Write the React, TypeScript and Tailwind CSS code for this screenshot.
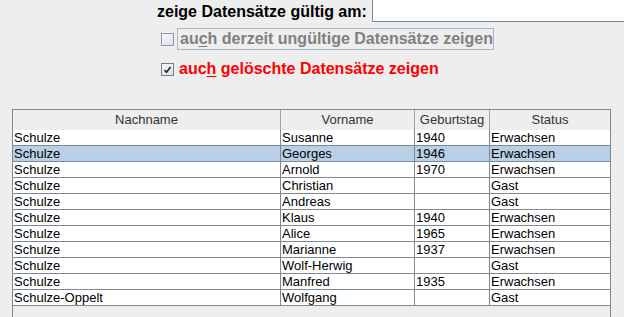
import React from "react";

const rows: [string, string, string, string][] = [
  ["Schulze", "Susanne", "1940", "Erwachsen"],
  ["Schulze", "Georges", "1946", "Erwachsen"],
  ["Schulze", "Arnold", "1970", "Erwachsen"],
  ["Schulze", "Christian", "", "Gast"],
  ["Schulze", "Andreas", "", "Gast"],
  ["Schulze", "Klaus", "1940", "Erwachsen"],
  ["Schulze", "Alice", "1965", "Erwachsen"],
  ["Schulze", "Marianne", "1937", "Erwachsen"],
  ["Schulze", "Wolf-Herwig", "", "Gast"],
  ["Schulze", "Manfred", "1935", "Erwachsen"],
  ["Schulze-Oppelt", "Wolfgang", "", "Gast"],
];

const cols = ["Nachname", "Vorname", "Geburtstag", "Status"];
const gridCls = "grid grid-cols-[268px_134px_75px_120px]";

export default function App() {
  return (
    <div
      className="w-[624px] h-[317px] overflow-hidden bg-[#eeeeee] relative"
      style={{ fontFamily: '"Liberation Sans", Arial, sans-serif' }}
    >
      {/* top row */}
      <div className="flex items-start h-[24px]">
        <div className="pl-[157px] pt-[3px] text-[16px] font-bold text-black leading-[18px] w-[372px] shrink-0 whitespace-nowrap">
          zeige Datensätze gültig am:
        </div>
        <div className="flex-1 h-[23px] -mt-[1px] bg-white border-l border-b border-[#7a8a99]" />
      </div>
      {/* checkbox 1 */}
      <div className="flex items-center h-[22px] mt-[4px] pl-[161px]">
        <div className="w-[13px] h-[13px] border border-[#8a99aa] bg-gradient-to-br from-[#f4f8fc] to-[#d8e2ec] shrink-0" />
        <div className="ml-[3px] h-[22px] w-[317px] border border-[#a3b8cc] flex items-center pl-[2px] text-[16px] font-bold text-[#808080] leading-[18px] whitespace-nowrap">
          au<span className="underline underline-offset-2">c</span>h derzeit ungültige Datensätze zeigen
        </div>
      </div>
      {/* checkbox 2 */}
      <div className="flex items-center h-[22px] mt-[8px] pl-[161px]">
        <div className="w-[13px] h-[13px] border border-[#6f7f90] bg-gradient-to-br from-[#f4f8fc] to-[#d8e2ec] shrink-0 flex items-center justify-center">
          <svg width="9" height="9" viewBox="0 0 9 9">
            <path d="M1.5 5 L3.5 7.2 L7.5 2" stroke="#222" strokeWidth="1.6" fill="none" />
          </svg>
        </div>
        <div className="ml-[3px] pl-[2px] text-[16px] font-bold text-[#ff0000] leading-[18px] whitespace-nowrap">
          auc<span className="underline underline-offset-2">h</span> gelöschte Datensätze zeigen
        </div>
      </div>
      {/* table */}
      <div className="ml-[12px] mt-[29px] w-[599px] h-[220px] border-l border-r border-t border-[#7a8a99] bg-[#eeeeee]">
        <div className={`${gridCls} h-[20px] border-b border-[#7a8a99]`}>
          {cols.map((c, i) => (
            <div
              key={c}
              className={`flex items-center justify-center text-[13px] text-[#333333] bg-[#eeeeee] ${i < 3 ? "border-r border-[#9aa8b6]" : ""}`}
            >
              {c}
            </div>
          ))}
        </div>
        {rows.map((r, ri) => (
          <div
            key={ri}
            className={`${gridCls} h-[16px] border-b border-[#7a8a99] ${ri === 1 ? "bg-[#b8cfe5]" : "bg-white"}`}
          >
            {r.map((v, ci) => (
              <div
                key={ci}
                className={`flex items-center pl-[1px] text-[13px] text-black leading-[15px] whitespace-nowrap overflow-hidden ${ci < 3 ? "border-r border-[#7a8a99]" : ""}`}
              >
                {v}
              </div>
            ))}
          </div>
        ))}
      </div>
    </div>
  );
}
